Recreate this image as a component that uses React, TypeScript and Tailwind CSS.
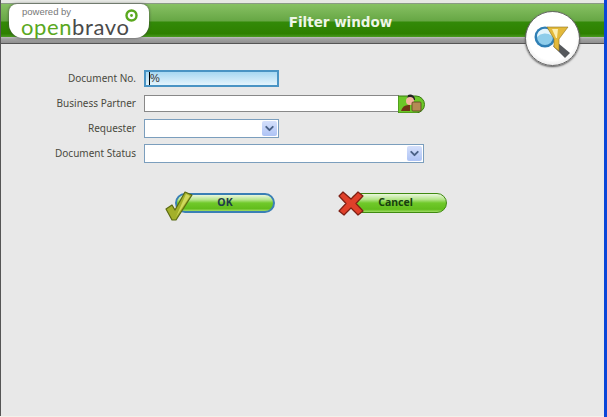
import { ChevronDown } from "lucide-react"

const font = { fontFamily: '"Liberation Sans", Arial, sans-serif' }

function SelectArrow() {
  return (
    <span className="flex h-[15px] w-[15px] items-center justify-center rounded-[2px] bg-gradient-to-b from-[#d5e0fb] to-[#aec3f5]">
      <ChevronDown size={13} strokeWidth={3.5} className="text-[#4a6186]" />
    </span>
  )
}

function Row({ label, children }: { label: string; children: React.ReactNode }) {
  return (
    <div className="flex h-[18px] items-center">
      <div className="w-[135px] shrink-0 text-right font-['Noto_Sans',sans-serif] text-[10px] leading-none text-[#4a4a3f]">{label}</div>
      <div className="ml-[8px] flex items-center">{children}</div>
    </div>
  )
}

function Select({ width }: { width: string }) {
  return (
    <div className={`flex h-[19px] items-center justify-end border border-[#7b9ebd] bg-white pr-[1px] ${width}`}>
      <SelectArrow />
    </div>
  )
}

function FilterIcon() {
  return (
    <svg width="38" height="34" viewBox="0 0 38 34" className="mt-[6px] ml-[1px]">
      <path d="M19 21 l5 -3 l12 10 l-5 5 z" fill="#55585c" />
      <circle cx="11" cy="12" r="10.5" fill="#2f7fb5" />
      <circle cx="11" cy="12" r="8" fill="#8fcdea" />
      <path d="M3 12 a8 8 0 0 1 12 -7 l3 6 a11 11 0 0 0 -15 1z" fill="#e4f4fb" />
      <path d="M13 2 h21 l-9 12 v12 l-5 -4 v-8 z" fill="#e3b93a" stroke="#8f7420" strokeWidth="0.6" />
      <path d="M18 4 h6 l-1 9 h-1 z" fill="#fbeeb0" />
    </svg>
  )
}

function OkButton() {
  return (
    <div className="relative flex h-[20px] w-[100px] items-center justify-center rounded-full border-2 border-[#3a7fb5] bg-[linear-gradient(#eaf7dd_0%,#b4e58a_30%,#70c92a_50%,#62bd1c_85%,#a0dc66_100%)] font-['Noto_Sans',sans-serif] text-[10.5px] font-bold text-[#1d3a4a]">
      OK
      <svg className="absolute -left-[12px] -top-[5px]" width="28" height="32" viewBox="0 0 28 32">
        <path d="M1 19 l6 -4 l3 5 L20 2 l7 3 L11 30 l-4 0 z" fill="#a3b02a" stroke="#5b6a12" strokeWidth="1.2" strokeLinejoin="round" />
        <path d="M21 4 l4 2 L11 27 z" fill="#d0d85c" />
      </svg>
    </div>
  )
}

function CancelButton() {
  return (
    <div className="relative flex h-[20px] w-[97px] items-center justify-center rounded-full border border-[#3f8a10] bg-[linear-gradient(#eaf7dd_0%,#b4e58a_30%,#70c92a_50%,#62bd1c_85%,#a0dc66_100%)] pr-[6px] font-['Noto_Sans',sans-serif] text-[10.5px] font-bold text-[#17400f]">
      Cancel
      <svg className="absolute -left-[13px] -top-[3px]" width="26" height="25" viewBox="0 0 26 25">
        <path d="M5 1 L13 8 L20 1 L25 5 L18 12.5 L25 20 L20 24 L13 17 L6 24 L1 20 L8 12.5 L1 5 Z" fill="#e0402a" stroke="#7d1f14" strokeWidth="1.2" strokeLinejoin="round" />
      </svg>
    </div>
  )
}

export default function App() {
  return (
    <div className="flex h-[417px] w-[607px] overflow-hidden bg-[#f2f2ea]" style={font}>
      <div className="flex h-[416px] w-[604px] flex-col border-l border-[#555] bg-[#e8e8e8]">
        {/* Header */}
        <div className="h-[3px] bg-[#e6e8e4]" />
        <div className="relative flex h-[34px] items-center justify-center border-t border-[#8a9a85] bg-[linear-gradient(#87c163_0%,#66a644_52%,#338a08_54%,#2e8000_90%,#4a9a20_100%)]">
          <div className="absolute left-[8px] top-0 h-[34px] w-[140px] rounded-b-[14px] rounded-t-[8px] bg-white shadow-[0_0_3px_#444]">
            <div className="mt-[3px] ml-[13px] text-[9.5px] leading-[10px] text-[#777]">powered by</div>
            <div className="relative ml-[12px] mt-[2px] text-[22px] leading-[16px] tracking-[0.6px]" style={{ fontFamily: '"Lato", sans-serif' }}>
              <span className="text-[#5aa81e]">open</span>
              <span className="text-[#4a4a4a]">bravo</span>
              <svg className="absolute -top-[10px] left-[104px]" width="13" height="13" viewBox="0 0 13 13">
                <circle cx="6.5" cy="6.5" r="5" fill="none" stroke="#5aa81e" strokeWidth="2.4" />
                <circle cx="6.5" cy="6.5" r="1.4" fill="#5aa81e" />
              </svg>
            </div>
          </div>
          <div className="ml-[76px] mt-[3px] font-['DejaVu_Sans',sans-serif] text-[13.5px] font-bold text-[#eef6e6]">Filter window</div>
          <div className="absolute right-[24px] top-[7px] z-10 flex h-[55px] w-[55px] items-center justify-center rounded-full border border-[#666] bg-[radial-gradient(circle_at_50%_45%,#fff_62%,#c8c8c8_100%)] shadow-[0_1px_2px_#555]">
            <FilterIcon />
          </div>
        </div>
        <div className="h-[6px] bg-[linear-gradient(#c0c0c0_0%,#a2a2a2_30%,#8f8f8f_100%)]" />
        <div className="h-[1px] bg-[#555]" />

        {/* Form */}
        <div className="mt-[25px] flex flex-col gap-[7px]">
          <Row label="Document No.">
            <div className="flex h-[17px] w-[135px] items-center border-2 border-[#4a94c4] bg-gradient-to-b from-[#a8d8f2] to-[#e4f4fc] pl-[3px] text-[11px] text-[#333]">
              <span className="h-[13px] w-px bg-black" />%
            </div>
          </Row>
          <Row label="Business Partner">
            <div className="h-[17px] w-[255px] border border-[#888] bg-white" />
            <svg width="28" height="19" viewBox="0 0 28 19" className="ml-[-1px]">
              <path d="M0 2 h18 a8.5 8.5 0 0 1 0 17 h-18 z" fill="#6cc828" stroke="#3b7a12" strokeWidth="1" />
              <path d="M10 1 a5 5 0 0 1 7 5 l-8 0 z" fill="#222" />
              <circle cx="12" cy="7" r="4" fill="#f4b7a0" />
              <path d="M3 17 q2 -7 9 -6 v6z" fill="#6e3516" />
              <rect x="14" y="8" width="9" height="9" rx="1" fill="#b58a55" stroke="#5a4020" strokeWidth="0.8" />
            </svg>
          </Row>
          <Row label="Requester"><Select width="w-[135px]" /></Row>
          <Row label="Document Status"><Select width="w-[280px]" /></Row>
        </div>

        {/* Buttons */}
        <div className="ml-[174px] mt-[31px] flex gap-[75px]">
          <OkButton />
          <CancelButton />
        </div>
      </div>
      <div className="h-full w-[3px] bg-[#0a46d8]" />
    </div>
  )
}
